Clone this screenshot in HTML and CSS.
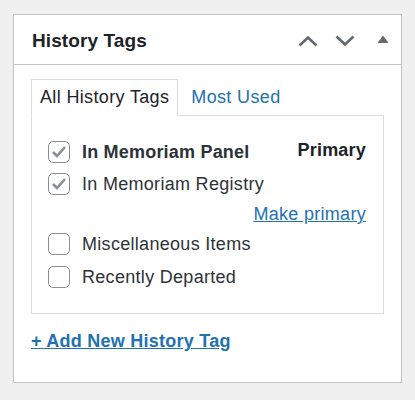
FILE: index.html
```html
<!DOCTYPE html>
<html>
<head>
<meta charset="utf-8">
<link rel="stylesheet" href="styles.css">
</head>
<body>
<div class="box">
  <div class="head">
    <h2 class="title">History Tags</h2>
    <div class="actions">
      <svg class="ico" width="22" height="14" viewBox="0 0 22 14"><path d="M2.5 11.5 L11 3.5 L19.5 11.5" fill="none" stroke="#646970" stroke-width="2.6"/></svg>
      <svg class="ico" width="22" height="14" viewBox="0 0 22 14"><path d="M2.5 2.5 L11 10.5 L19.5 2.5" fill="none" stroke="#646970" stroke-width="2.6"/></svg>
      <svg class="ico tri" width="12" height="8" viewBox="0 0 12 8"><path d="M0.5 8 L6 0.5 L11.5 8 Z" fill="#646970"/></svg>
    </div>
  </div>
  <div class="inside">
    <div class="tabs">
      <span class="tab active">All History Tags</span>
      <span class="tab link">Most Used</span>
    </div>
    <div class="panel">
      <div class="row">
        <span class="cb checked"><svg width="16" height="14" viewBox="0 0 16 14"><path d="M2 7 L6 11 L14 2" fill="none" stroke="#8c8f94" stroke-width="2.6"/></svg></span>
        <span class="label bold">In Memoriam Panel</span>
        <span class="primary">Primary</span>
      </div>
      <div class="row">
        <span class="cb checked"><svg width="16" height="14" viewBox="0 0 16 14"><path d="M2 7 L6 11 L14 2" fill="none" stroke="#8c8f94" stroke-width="2.6"/></svg></span>
        <span class="label">In Memoriam Registry</span>
      </div>
      <div class="make"><a class="mk">Make primary</a></div>
      <div class="row">
        <span class="cb"></span>
        <span class="label">Miscellaneous Items</span>
      </div>
      <div class="row">
        <span class="cb"></span>
        <span class="label">Recently Departed</span>
      </div>
    </div>
    <a class="add">+ Add New History Tag</a>
  </div>
</div>
</body>
</html>
```

FILE: styles.css
```css
html, body { margin: 0; padding: 0; }
body {
  background: #f0f0f1;
  font-family: "Liberation Sans", Arial, sans-serif;
  color: #1d2327;
  padding: 14px 13px 0 13px;
  width: 415px;
  box-sizing: border-box;
}
.box {
  width: 389px;
  height: 369px;
  box-sizing: border-box;
  background: #fff;
  border: 1px solid #c3c4c7;
  box-shadow: 0 1px 1px rgba(0,0,0,0.04);
}
.head {
  height: 50px;
  box-sizing: border-box;
  border-bottom: 1px solid #c3c4c7;
  display: flex;
  align-items: center;
  justify-content: space-between;
  padding: 0 12px 0 18px;
}
.title {
  margin: 0;
  font-size: 19px;
  font-weight: bold;
  color: #1d2327;
  padding-top: 2px;
  letter-spacing: 0.1px;
}
.actions {
  display: flex;
  align-items: center;
  gap: 15px;
  padding-top: 2px;
}
.tri { margin-left: 6px; margin-top: -3px; }
.inside {
  padding: 14px 17px 0 17px;
}
.tabs {
  display: flex;
  align-items: flex-end;
  height: 36px;
}
.tab {
  font-size: 18px;
  letter-spacing: 0.35px;
  line-height: 34px;
  padding: 0 8px 0 8px;
}
.tab.active {
  border: 1px solid #dcdcde;
  border-bottom: 1px solid #fff;
  color: #1d2327;
  height: 35px;
  margin-bottom: -1px;
  position: relative;
  z-index: 1;
  background: #fff;
}
.tab.link {
  color: #2271b1;
  padding-left: 13px;
  height: 35px;
}
.panel {
  border: 1px solid #dcdcde;
  width: 353px;
  height: 199px;
  box-sizing: border-box;
  padding: 25px 17px 0 16px;
}
.row {
  display: flex;
  align-items: center;
  height: 22px;
  margin-bottom: 10px;
}
.cb {
  width: 22px;
  height: 22px;
  box-sizing: border-box;
  border: 1.5px solid #8c8f94;
  border-radius: 5px;
  display: flex;
  align-items: center;
  justify-content: center;
  flex: none;
}
.label {
  margin-left: 12px;
  font-size: 18px;
  letter-spacing: 0.3px;
  color: #2c3338;
}
.bold { font-weight: bold; letter-spacing: 0.2px; }
.primary {
  margin-left: auto;
  font-weight: bold;
  font-size: 18px;
  letter-spacing: 0.2px;
  color: #1d2327;
  margin-top: -4px;
}
.make {
  text-align: right;
  height: 25px;
  margin-top: -1px;
  margin-bottom: 4px;
}
.mk {
  color: #2271b1;
  text-decoration: underline;
  font-size: 18px;
  letter-spacing: 0.3px;
}
.row + .row + .make + .row { margin-bottom: 11px; }
.add {
  display: inline-block;
  margin-top: 17px;
  color: #2271b1;
  font-size: 18px;
  letter-spacing: 0.25px;
  font-weight: bold;
  text-decoration: underline;
}
```
